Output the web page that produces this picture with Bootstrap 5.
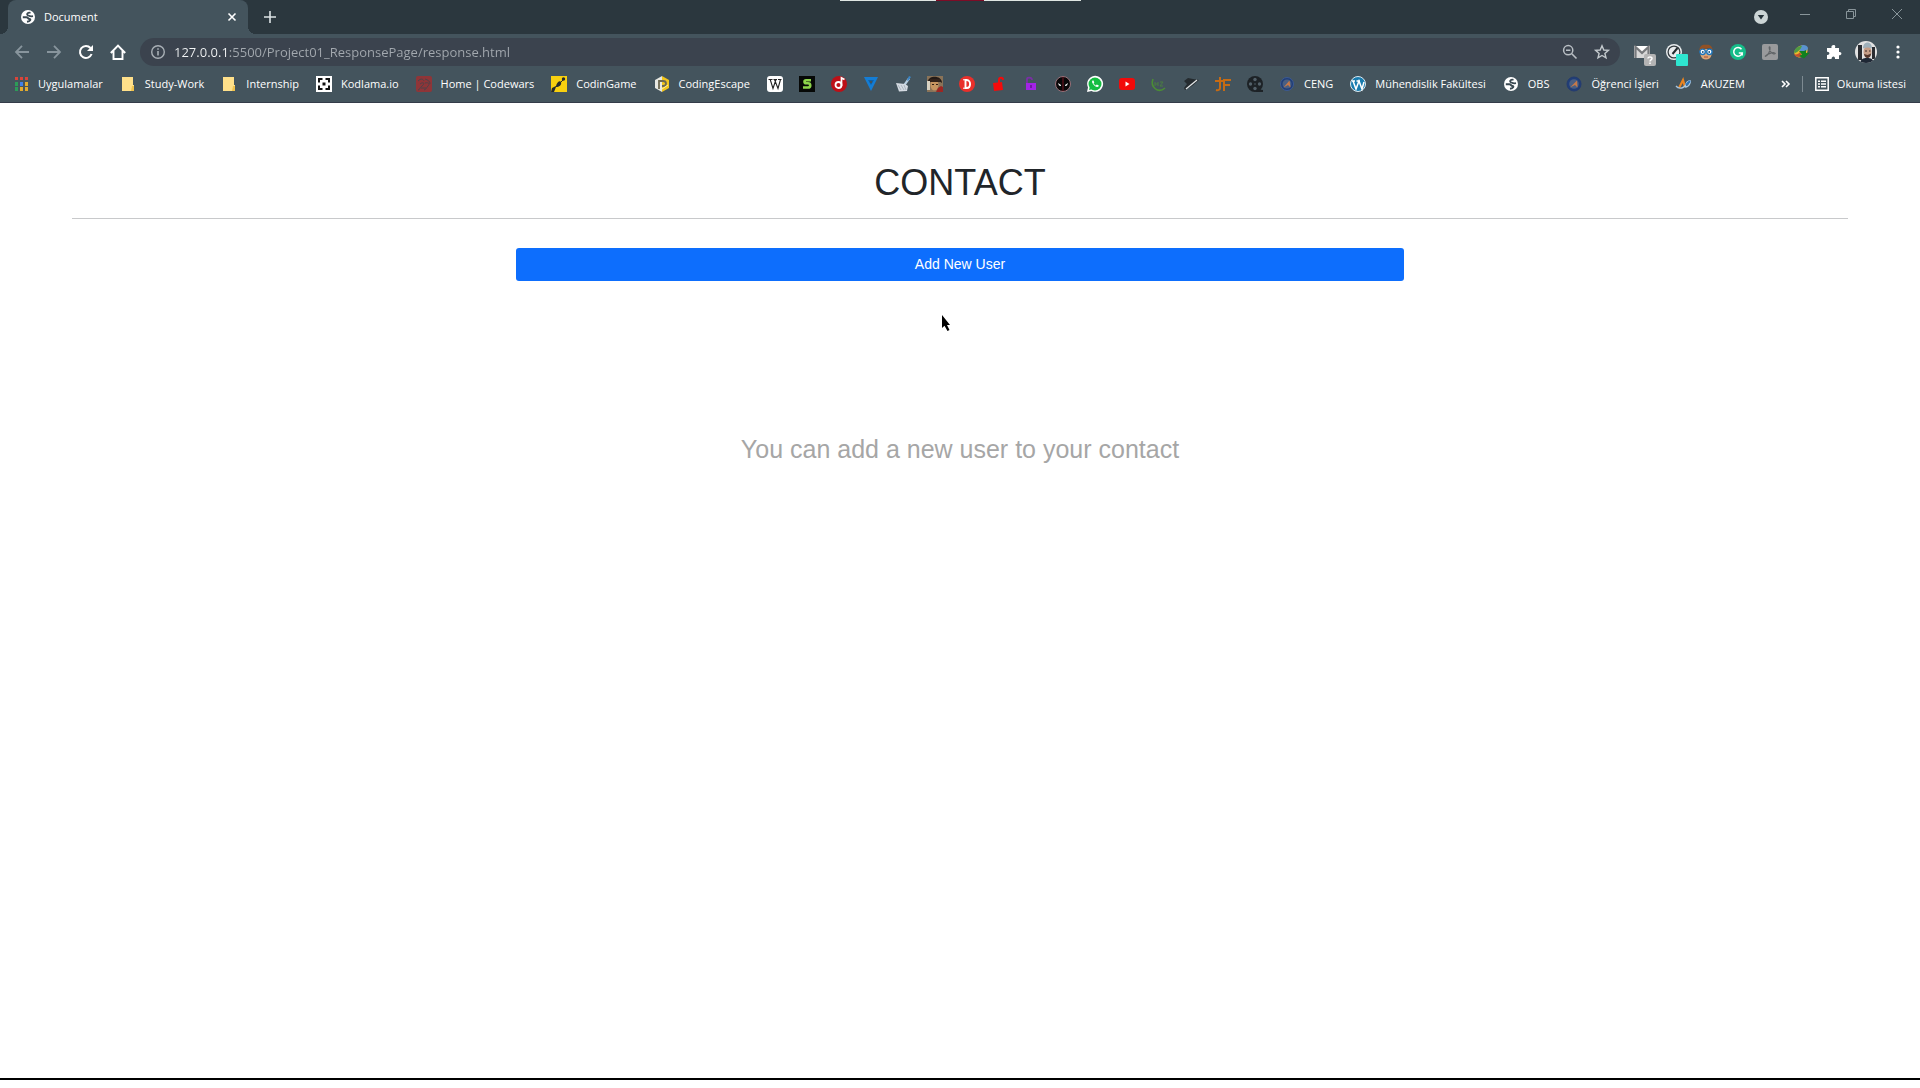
<!DOCTYPE html>
<html lang="tr">
<head>
<meta charset="utf-8">
<meta name="viewport" content="width=device-width, initial-scale=1">
<title>Document</title>
<link href="https://cdn.jsdelivr.net/npm/bootstrap@5.3.0/dist/css/bootstrap.min.css" rel="stylesheet">
<style>
:root{--frame:#2b373e;--bar:#44545d;--field:#3b434e}
body{font-family:"Liberation Sans",Arial,sans-serif;background:#fff}
svg{display:block;flex:none;overflow:visible}
.chrome{font-family:"Open Sans","Noto Sans",sans-serif;font-size:11px;line-height:16px;color:#fff}
.chrome button{background:none;border:0;padding:0;color:inherit;display:flex;align-items:center;justify-content:center;flex:none}
.tabstrip{background:var(--frame);height:34px;padding-left:8px}
.tab{background:var(--bar);width:240px;height:34px;border-radius:8px 8px 0 0;padding:0 10px 0 13px;gap:9px}
.tab::before,.tab::after{content:"";position:absolute;bottom:0;width:8px;height:8px}
.tab::before{left:-8px;background:radial-gradient(circle at 0 0,transparent 8px,var(--bar) 8px)}
.tab::after{right:-8px;background:radial-gradient(circle at 100% 0,transparent 8px,var(--bar) 8px)}
.tabstrip .newtab{width:28px;height:34px;margin-left:8px}
.wincontrols button{width:46px;height:28px;color:#89959a}
.wincontrols .search-tabs{width:28px;height:34px;margin-right:7px}
.share-strip{left:840px;top:0;width:241px;height:1px;background:linear-gradient(90deg,#dfe6e2 96px,#7d0c26 96px 144px,#dfe6e2 144px)}
.toolbar{background:var(--bar);height:36px;padding:0 6px}
.toolbar .tool{width:32px;height:32px}
.omnibox{background:var(--field);height:28px;border-radius:14px;margin:0 6px 0 6px;padding:0 2px 0 10px}
.url{min-width:0;border:0;outline:0;padding:0;height:24px;font-family:"Open Sans","Noto Sans",sans-serif;font-size:13px;color:transparent;background:linear-gradient(90deg,#f2f4f5 54px,#a3a9af 54px);-webkit-background-clip:text;background-clip:text}
.bookmarks{background:var(--bar);height:33px;padding:0 14px 4px 13px;border-bottom:1px solid #343b49;gap:16px}
.bookmarks a{color:inherit;text-decoration:none;display:flex;align-items:center;gap:9px;white-space:nowrap;flex:none}
.bookmarks .labelled{padding-right:1px}
.divide{width:1px;height:16px;background:#7d8a91}
.page-body{min-height:975px;padding:58px 72px 0}
.page-title{font-size:36px;line-height:43px;margin:0}
.rule{height:0;margin:14px 0 29px;border:0;border-top:1px solid #c8c9cb;background:none;opacity:1}
.add-btn{height:33px;padding:0;font-size:14px;border-radius:3px;background:#0d6efd}
.hint{font-size:25px;line-height:38px;color:#a6a6a6;margin:149px 0 0}
.screen-edge{height:2px;background:#000}
.cursor{left:942px;top:315px}
</style>
</head>
<body>
<svg width="0" height="0" class="position-absolute" aria-hidden="true"><symbol id="globe" viewBox="0 0 14 14"><circle cx="7" cy="7" r="7" fill="#fff"/><path d="M9.500 2.800C6.500 2.200 5 4.500 7 5.400c1.500.7 2.500 1.300 5 .8" fill="none" stroke="#3a4952" stroke-width="1.700"/><path d="M1.800 7.300h3.700c1.800 0 1.200 1.600 3 1.700 1.700.1 1 2.100-2.500 2.700" fill="none" stroke="#3a4952" stroke-width="1.900"/></symbol></svg>
<header class="chrome">
  <div class="share-strip position-absolute"></div>
  <div class="tabstrip d-flex align-items-start">
    <div class="tab position-relative d-flex align-items-center">
      <svg width="14" height="14"><use href="#globe"/></svg>
      <span class="flex-grow-1">Document</span>
      <button type="button" aria-label="Close tab"><svg width="12" height="12" viewBox="0 0 12 12"><path d="M2.500 2.500l7 7M9.500 2.500l-7 7" stroke="#fff" stroke-width="1.600"/></svg></button>
    </div>
    <button type="button" class="newtab" aria-label="New tab"><svg width="12" height="12" viewBox="0 0 12 12"><path d="M6 0v12M0 6h12" stroke="#dde3e5" stroke-width="1.600"/></svg></button>
    <div class="wincontrols d-flex ms-auto">
      <button type="button" class="search-tabs" aria-label="Search tabs"><svg width="14" height="14" viewBox="0 0 14 14"><circle cx="7" cy="7" r="7" fill="#ccd5d6"/><path d="M3.800 5h6.400L7 9.500z" fill="#26333a"/></svg></button>
      <button type="button" aria-label="Minimize"><svg width="10" height="10" viewBox="0 0 10 10"><path d="M0 5.500h10" stroke="currentColor"/></svg></button>
      <button type="button" aria-label="Restore"><svg width="10" height="10" viewBox="0 0 10 10"><path d="M.5 2.500h7v7h-7zM2.500 2.500v-2h7v7h-2" fill="none" stroke="currentColor"/></svg></button>
      <button type="button" aria-label="Close"><svg width="10" height="10" viewBox="0 0 10 10"><path d="M0 0l10 10M10 0L0 10" stroke="currentColor"/></svg></button>
    </div>
  </div>

  <div class="toolbar d-flex align-items-center">
    <button type="button" class="tool" aria-label="Back"><svg width="14" height="14" viewBox="0 0 14 14"><path d="M14 7H1.500M7 .8L1 7l6 6.200" fill="none" stroke="#88959d" stroke-width="1.800"/></svg></button>
    <button type="button" class="tool" aria-label="Forward"><svg width="14" height="14" viewBox="0 0 14 14"><path d="M0 7h12.500M7 .8L13 7l-6 6.200" fill="none" stroke="#88959d" stroke-width="1.800"/></svg></button>
    <button type="button" class="tool" aria-label="Reload"><svg width="16" height="16" viewBox="0 0 16 16"><path d="M13.600 10A6 6 0 1 1 12.500 4" fill="none" stroke="#fff" stroke-width="2"/><path d="M15 1v6H9z" fill="#fff"/></svg></button>
    <button type="button" class="tool" aria-label="Home"><svg width="16" height="16" viewBox="0 0 16 16"><path d="M.8 9L8 1.500 15.200 9M3.500 7v8h9V7" fill="none" stroke="#fff" stroke-width="1.900"/></svg></button>
    <div class="omnibox d-flex align-items-center flex-grow-1">
      <svg width="16" height="16" viewBox="0 0 16 16" class="me-2"><circle cx="8" cy="8" r="6.300" fill="none" stroke="#a9b0b6" stroke-width="1.400"/><path d="M8 7v4.500M8 4.300v1.500" stroke="#a9b0b6" stroke-width="1.600"/></svg>
      <input class="url flex-grow-1" type="text" aria-label="Address" value="127.0.0.1:5500/Project01_ResponsePage/response.html">
      <button type="button" class="tool" aria-label="Zoom"><svg width="16" height="16" viewBox="0 0 16 16"><circle cx="6.200" cy="6.200" r="4.600" fill="none" stroke="#b9bfc4" stroke-width="1.500"/><path d="M9.800 9.800l4.700 4.700M4 6.200h4.400" stroke="#b9bfc4" stroke-width="1.600"/></svg></button>
      <button type="button" class="tool" aria-label="Bookmark this page"><svg width="16" height="16" viewBox="0 0 16 16"><path d="M8 1.800l1.800 4.200 4.600.4-3.500 3 1.100 4.500-4-2.400-4 2.400 1.100-4.500-3.500-3 4.600-.4z" fill="none" stroke="#c3c9cd" stroke-width="1.400"/></svg></button>
    </div>
    <button type="button" class="tool" aria-label="Mail checker"><svg width="24" height="24" viewBox="0 0 24 24"><path d="M4 6h16v12H4z" fill="#d8d8d8"/><path d="M5.500 18V7l6.500 6 6.500-6v11" fill="none" stroke="#77797c" stroke-width="2.200"/><path d="M6.500 6l5.500 5 5.500-5z" fill="#fff"/><rect x="14" y="14" width="12" height="12" rx="2" fill="#b4b4b4"/><path d="M18 18.500c0-2.300 4.200-2 4 0 0 1.500-2 1.300-2 3M20 22.500v1.500" fill="none" stroke="#fff" stroke-width="1.500"/></svg></button>
    <button type="button" class="tool" aria-label="Page speed"><svg width="24" height="24" viewBox="0 0 24 24"><circle cx="12" cy="12" r="8" fill="#e9ecee"/><circle cx="12" cy="12" r="5.900" fill="none" stroke="#343b40" stroke-width="1.300"/><path d="M10.500 14L15.500 8" stroke="#22282c" stroke-width="2"/><rect x="14" y="14" width="12" height="12" rx="1" fill="#2ee5d0"/></svg></button>
    <button type="button" class="tool" aria-label="Professor extension"><svg width="16" height="16" viewBox="0 0 16 16"><path d="M2.500 5h11v6c-1 6-10 6-11 0z" fill="#dca576"/><path d="M1.500 7C1 1.500 5 .3 8 .8c4-.8 7 2 6.500 6.200L12 4 5 5z" fill="#925125"/><circle cx="4.600" cy="7.800" r="2.700" fill="#fff" stroke="#1d76bd" stroke-width="1.400"/><circle cx="11.400" cy="7.800" r="2.700" fill="#fff" stroke="#1d76bd" stroke-width="1.400"/><circle cx="4.800" cy="8" r=".9" fill="#174b75"/><circle cx="11.200" cy="8" r=".9" fill="#174b75"/><path d="M6 13h4" stroke="#a34f38"/></svg></button>
    <button type="button" class="tool" aria-label="Grammar check"><svg width="16" height="16" viewBox="0 0 16 16"><circle cx="8" cy="8" r="8" fill="#15bd89"/><path d="M11.500 5.300A4.300 4.300 0 1 0 12.200 9H8.800M12.200 9v2.600" fill="none" stroke="#fff" stroke-width="1.500"/></svg></button>
    <button type="button" class="tool" aria-label="PDF tools"><svg width="16" height="16" viewBox="0 0 16 16"><rect width="16" height="16" rx="2" fill="#999a9c"/><path d="M3 12.500C6 11.500 8.500 7 8 3.500 7.500 1.500 6.200 4 8.500 7.500c1.500 2.400 4 3 4.800 2C13 8 7 8.500 3 12.500z" fill="none" stroke="#606467" stroke-width="1.200"/></svg></button>
    <button type="button" class="tool" aria-label="Download manager"><svg width="16" height="16" viewBox="0 0 16 16"><ellipse cx="7" cy="7.500" rx="7" ry="5.600" transform="rotate(-30 7 7.500)" fill="#e9b92b"/><path d="M5 4c1-4 8-4 9 0 0 3-5 5-8 3z" fill="#5a93cf"/><path d="M0 8c1-4 4-6 8-6-1 3-4 6-7 7z" fill="#4f9b43"/><path d="M0 10c2 1 5 0 6-2l2 4c-3 2-7 1-8-2z" fill="#c4502e"/><path d="M5 7l5 0 2-1v3l4-.5-6 6L5 12l3-1.500z" fill="#128020"/></svg></button>
    <button type="button" class="tool" aria-label="Extensions"><svg width="16" height="16" viewBox="0 0 16 16"><path d="M1 4h4.500C4.500 1 9 0 9.300 2.500L9 4h4v4c3-.7 3.500 3.500 0 3.300V15H9c.5-3.500-3.500-3.500-3.500 0H1v-4c3.200.4 3.200-3.500 0-3.200z" fill="#fff"/></svg></button>
    <button type="button" class="tool" aria-label="Profile"><svg width="22" height="22" viewBox="0 0 22 22"><defs><clipPath id="face"><circle cx="11" cy="11" r="11"/></clipPath></defs><g clip-path="url(#face)"><path d="M0 0h22v22H0z" fill="#e2e2e2"/><path d="M3 4h4v15H3zM17 6h3v12h-3z" fill="#292c31"/><path d="M5 22c1-4 3-5 7-5s6 1 7 5z" fill="#1f2835"/><ellipse cx="12.500" cy="11" rx="4" ry="6" fill="#c69d86"/><path d="M8 7.500c0-8 9-8 9 0-3-1.500-6-1.500-9 0z" fill="#9fb0ba"/><path d="M9 13c1 5.500 6 5.500 7.200-.5L12.500 14z" fill="#54372d"/><path d="M10 10h2M14 10h1.500" stroke="#3a2b28"/></g></svg></button>
    <button type="button" class="tool" aria-label="Menu"><svg width="4" height="14" viewBox="0 0 4 14" fill="#fff"><circle cx="2" cy="2" r="1.600"/><circle cx="2" cy="7" r="1.600"/><circle cx="2" cy="12" r="1.600"/></svg></button>
  </div>

  <nav class="bookmarks d-flex align-items-center" aria-label="Bookmarks">
    <a href="#" class="labelled"><svg width="16" height="16" viewBox="0 0 16 16"><path d="M2 1h3v3H2zM7 1h3v3H7zM12 1h3v3h-3z" fill="#d9453a"/><path d="M2 6h3v4H2zM2 11h3v4H2z" fill="#2d9c58"/><path d="M7 6h3v4H7z" fill="#3f80e8"/><path d="M12 6h3v4h-3zM7 11h3v4H7zM12 11h3v4h-3z" fill="#e0aa2e"/></svg>Uygulamalar</a>
    <a href="#" class="labelled"><svg width="16" height="16" viewBox="0 0 16 16"><path d="M2 1h11v8h1v6H2z" fill="#ffe08a"/><path d="M12 10h2v5h-3z" fill="#f0c24c"/></svg>Study-Work</a>
    <a href="#" class="labelled"><svg width="16" height="16" viewBox="0 0 16 16"><path d="M2 1h11v8h1v6H2z" fill="#ffe08a"/><path d="M12 10h2v5h-3z" fill="#f0c24c"/></svg>Internship</a>
    <a href="#" class="labelled"><svg width="16" height="16" viewBox="0 0 16 16"><path d="M0 0h16v16H0z" fill="#fff"/><path d="M3 6.500V3h3.500M9.500 3H13v3.500M13 9.500V13H9.500M6.500 13H3V9.500" fill="none" stroke="#111" stroke-width="2"/><path d="M6.500 6.500h3v3h-3z" fill="#111"/></svg>Kodlama.io</a>
    <a href="#" class="labelled"><svg width="16" height="16" viewBox="0 0 16 16"><rect width="16" height="16" rx="2" fill="#8f3538"/><path d="M2 5c3-3 5-2 6 0M4 8c4-3 5 0 2 2s-2 4-4 4M9 3c3 1 5 2 5 5M9 7c4-1 5 1 3 3s-1 3-4 4M5 12h5" fill="none" stroke="#4e4349" stroke-width="1"/></svg>Home | Codewars</a>
    <a href="#" class="labelled"><svg width="16" height="16" viewBox="0 0 16 16"><path d="M0 0h16v16H0z" fill="#f9d00f"/><path d="M0 16l1-4 4-2c1-4 4-6 5-4 1 3-2 5-5 5l-2 5z" fill="#262a2d"/><circle cx="12.500" cy="3" r="1.700" fill="#262a2d"/><path d="M9 7l3-3" stroke="#262a2d"/></svg>CodinGame</a>
    <a href="#" class="labelled"><svg width="16" height="16" viewBox="0 0 16 16"><path d="M1 4l7-4v16l-7-4z" fill="#e8e8e2"/><path d="M8 0l7 4v8l-7 4z" fill="#f2c51c"/><path d="M5 13V5h4c4 0 4 5 0 5H8" fill="none" stroke="#6d6850" stroke-width="1.800"/><path d="M8 13l6-4" stroke="#fff0a0"/></svg>CodingEscape</a>
    <a href="#" aria-label="Wikipedia"><svg width="16" height="16" viewBox="0 0 16 16"><rect width="16" height="16" rx="3" fill="#fff"/><path d="M1.500 3.500h4M6.500 3.500h3.500M11 3.500h3.500M3.200 3.500L6 12.500l3-9M7.500 3.500l3.500 9 2.500-9" fill="none" stroke="#222" stroke-width="1.100"/></svg></a>
    <a href="#" aria-label="Streaming"><svg width="16" height="16" viewBox="0 0 16 16"><path d="M0 0h16v16H0z" fill="#060806"/><path d="M12 4.300H7c-2 0-2 3 0 3h2c3 0 3 4.200 0 4.200H4" fill="none" stroke="#8bd34a" stroke-width="2.600"/></svg></a>
    <a href="#" aria-label="Music"><svg width="16" height="16" viewBox="0 0 16 16"><circle cx="8" cy="8" r="8" fill="#bd1017"/><circle cx="7.500" cy="9" r="3" fill="none" stroke="#fff" stroke-width="1.800"/><path d="M10.500 10V2l3 1.500" fill="none" stroke="#fff" stroke-width="1.700"/></svg></a>
    <a href="#" aria-label="Triangle"><svg width="16" height="16" viewBox="0 0 16 16"><path d="M1 1h14L8 15z" fill="#147dd5"/><path d="M5 4h6l-3 5z" fill="#0c62ad"/><circle cx="8" cy="6" r="1.200" fill="#44545d"/></svg></a>
    <a href="#" aria-label="Cleaner"><svg width="16" height="16" viewBox="0 0 16 16"><path d="M8 9l5-7 2 1-5 7z" fill="#b9cfe0"/><path d="M14 0l2 1-3 4-1-1z" fill="#3b86c8"/><path d="M1 7l9 1 3 2-1 5-8 .5z" fill="#d5dbe2"/><path d="M3 9l3 5M6 9l3 5M9 9l2 5" stroke="#9aa5af" stroke-width=".7"/></svg></a>
    <a href="#" aria-label="Portrait"><svg width="16" height="16" viewBox="0 0 16 16"><path d="M0 0h16v16H0z" fill="#8a7358"/><path d="M0 5h3v9H0z" fill="#d9d2c2"/><path d="M1 5C2-1 15-1 15 7L12 5 3 5z" fill="#241a15"/><ellipse cx="7.500" cy="9" rx="4" ry="5.500" fill="#c69460"/><path d="M3 3h10v3H3z" fill="#33221a"/><path d="M11 12l3-2 2 1v5H9z" fill="#9e2622"/><path d="M5 8.500h2M9 8.500h2" stroke="#332016"/></svg></a>
    <a href="#" aria-label="D"><svg width="16" height="16" viewBox="0 0 16 16"><circle cx="8" cy="8" r="8" fill="#e9302b"/><path d="M4 3.800h4M4 12.200h4" stroke="#fff"/><path d="M6.500 4v8h1.200c4.500 0 4.500-8 0-8z" fill="none" stroke="#fff" stroke-width="1.900"/></svg></a>
    <a href="#" aria-label="Red lock"><svg width="16" height="16" viewBox="0 0 16 16"><path d="M2 7l9-1 1 8-9 1z" fill="#f40b0b"/><path d="M8 7V4c0-3 4-3 4 0" fill="none" stroke="#f40b0b" stroke-width="2"/></svg></a>
    <a href="#" aria-label="Purple lock"><svg width="16" height="16" viewBox="0 0 16 16"><path d="M3 7h10v7H3z" fill="#a323e6"/><path d="M4 7V3c0-2 5-2 5 1" fill="none" stroke="#7a2fa5" stroke-width="1.800"/><path d="M8 9v3" stroke="#63148f" stroke-width="1.500"/></svg></a>
    <a href="#" aria-label="Mask"><svg width="16" height="16" viewBox="0 0 16 16"><circle cx="8" cy="8" r="7.500" fill="#0a0809" stroke="#997078"/><path d="M8 1v14" stroke="#52101a" stroke-width="1.500"/><path d="M3 7l3 2v1l-2-.5zM13 7l-3 2v1l2-.5z" fill="#fff"/></svg></a>
    <a href="#" aria-label="WhatsApp"><svg width="16" height="16" viewBox="0 0 16 16"><path d="M0 16l1-4.500A8 8 0 1 1 4.500 15z" fill="#fff"/><circle cx="8" cy="8" r="6.500" fill="#15bd42"/><path d="M2 14l1-4 3 3z" fill="#15bd42"/><path d="M5.500 4.500c-2 2 3.500 8 6 6l.3-1-2-1-1 1C8 9.200 7 8 6.500 7.200l.8-.8-.8-2z" fill="#fff"/></svg></a>
    <a href="#" aria-label="YouTube"><svg width="16" height="16" viewBox="0 0 16 16"><rect y="2" width="16" height="12" rx="3" fill="#f20a0a"/><path d="M6.500 5.500l4 2.500-4 2.500z" fill="#fff"/></svg></a>
    <a href="#" aria-label="Green ring"><svg width="16" height="16" viewBox="0 0 16 16"><path d="M2 3c-3 8 5 15 12 9" fill="none" stroke="#4b8d35" stroke-width="1.600"/><path d="M4 6v4M4 8h3M7 6v4M9 6h3L9 10h3" fill="none" stroke="#4a7d42"/></svg></a>
    <a href="#" aria-label="Dark hat"><svg width="16" height="16" viewBox="0 0 16 16"><path d="M1 5l4-3 5 1 6 1-7 6-7 4-1-2 3-4z" fill="#252b2f"/><path d="M3 13L14 4" stroke="#e0e4e5" stroke-width="1.300"/></svg></a>
    <a href="#" aria-label="JF"><svg width="16" height="16" viewBox="0 0 16 16"><path d="M0 5h8M5 1v11c0 2-2 2.500-4 2M9 15V4h7M9 9h6" fill="none" stroke="#c76b13" stroke-width="2"/></svg></a>
    <a href="#" aria-label="Film reel"><svg width="16" height="16" viewBox="0 0 16 16"><circle cx="8" cy="8" r="8" fill="#1d2226"/><path d="M9 13l7 1v2H9z" fill="#1d2226"/><g fill="#53616a"><circle cx="8" cy="3.500" r="1.700"/><circle cx="8" cy="12.500" r="1.700"/><circle cx="3.500" cy="8" r="1.700"/><circle cx="12.500" cy="8" r="1.700"/><circle cx="8" cy="8" r=".8"/></g></svg></a>
    <a href="#" class="labelled"><svg width="16" height="16" viewBox="0 0 16 16"><circle cx="8" cy="8" r="6.500" fill="#203e78" stroke="#3c5a92"/><circle cx="8" cy="8" r="4.500" fill="#4a5f83"/><path d="M4.500 11.500l6-7 1 7-2.500-2.500z" fill="#c67949"/></svg>CENG</a>
    <a href="#" class="labelled"><svg width="16" height="16" viewBox="0 0 16 16"><circle cx="8" cy="8" r="7.500" fill="#187bae" stroke="#dceaf2"/><path d="M2 5h3M6.500 5h3.500M3 5l3 8 3-8 3 8 2-7" fill="none" stroke="#fff" stroke-width="1.500"/></svg>Mühendislik Fakültesi</a>
    <a href="#" class="labelled"><svg width="16" height="16" viewBox="-1 -1 16 16"><use href="#globe" width="14" height="14"/></svg>OBS</a>
    <a href="#" class="labelled"><svg width="16" height="16" viewBox="0 0 16 16"><circle cx="8" cy="8" r="7" fill="#203e78" stroke="#233a70"/><circle cx="8" cy="8" r="4.800" fill="#4a5f83"/><path d="M4 11.500l7-7 .5 7L9 9z" fill="#c67949"/></svg>Öğrenci İşleri</a>
    <a href="#" class="labelled"><svg width="16" height="16" viewBox="0 0 16 16"><path d="M3 12L7 4l2 7" fill="none" stroke="#e98421" stroke-width="2.200"/><path d="M0 10c3 4 9 2 10-2 1-3 6-5 4-1-1 3-3 4-5 4" fill="none" stroke="#a9c8e3" stroke-width="1.300"/><path d="M10 9l4-4" stroke="#2b75bd" stroke-width="2"/></svg>AKUZEM</a>
    <div class="d-flex align-items-center ms-auto gap-2">
      <button type="button" aria-label="More bookmarks" class="me-1"><svg width="9" height="8" viewBox="0 0 9 8"><path d="M1 1l3 3-3 3M5 1l3 3-3 3" fill="none" stroke="#fff" stroke-width="1.600"/></svg></button>
      <div class="divide"></div>
      <button type="button" class="gap-2 ms-1"><svg width="14" height="14" viewBox="0 0 14 14"><path d="M.8.8h12.400v12.400H.8z" fill="none" stroke="#fff" stroke-width="1.500"/><path d="M3 4.200h2M6 4.200h5M3 7h2M6 7h5M3 9.800h2M6 9.800h5" stroke="#fff" stroke-width="1.500"/></svg>Okuma listesi</button>
    </div>
  </nav>
</header>

<main class="page-body text-center">
  <h1 class="page-title fw-normal">CONTACT</h1>
  <hr class="rule">
  <button type="button" class="btn btn-primary add-btn w-50 d-block mx-auto border-0">Add New User</button>
  <p class="hint">You can add a new user to your contact</p>
</main>
<div class="screen-edge"></div>
<svg class="cursor position-absolute" width="10" height="17" viewBox="0 0 10 17"><path d="M0 0v13l2.500-2.300L5.500 16l2-1-2.500-5H8z" fill="#000"/></svg>
<script src="https://cdn.jsdelivr.net/npm/bootstrap@5.3.0/dist/js/bootstrap.bundle.min.js"></script>
</body>
</html>
